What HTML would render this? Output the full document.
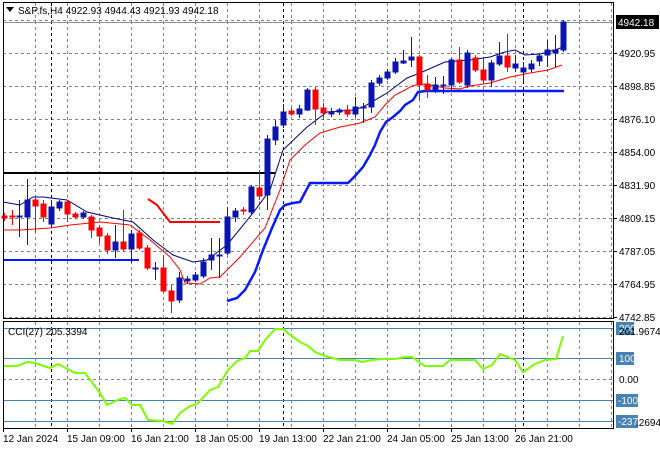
<!DOCTYPE html>
<html><head><meta charset="utf-8"><style>
html,body{margin:0;padding:0;background:#fff;width:660px;height:450px;overflow:hidden}
svg{display:block}
text{font-family:"Liberation Sans",sans-serif;font-size:10px;fill:#000}
</style></head><body>
<svg width="660" height="450" viewBox="0 0 660 450" xmlns="http://www.w3.org/2000/svg">
<rect width="660" height="450" fill="#fff"/>
<g stroke="#7a8290" stroke-width="1" stroke-dasharray="3,3" fill="none">
<path d="M3 20.5H613M3 53.5H613M3 86.5H613M3 119.5H613M3 152.5H613M3 185.5H613M3 218.5H613M3 251.5H613M3 284.5H613M3 317.5H613"/>
<path d="M35.5 3V318M67.5 3V318M99.5 3V318M131.5 3V318M163.5 3V318M195.5 3V318M227.5 3V318M259.5 3V318M291.5 3V318M323.5 3V318M355.5 3V318M387.5 3V318M419.5 3V318M451.5 3V318M483.5 3V318M515.5 3V318M547.5 3V318M579.5 3V318M611.5 3V318"/>
<path d="M35.5 322V428M67.5 322V428M99.5 322V428M131.5 322V428M163.5 322V428M195.5 322V428M227.5 322V428M259.5 322V428M291.5 322V428M323.5 322V428M355.5 322V428M387.5 322V428M419.5 322V428M451.5 322V428M483.5 322V428M515.5 322V428M547.5 322V428M579.5 322V428M611.5 322V428"/>
<path d="M3 379.5H613"/>
</g>
<g stroke="#000" stroke-width="1" stroke-dasharray="3,3">
<path d="M51.5 3V428M283.5 3V428M523.5 3V428"/>
</g>
<line x1="3" y1="22.5" x2="613" y2="22.5" stroke="#8a929a"/>
<g stroke="#4682b4" stroke-width="1">
<path d="M3 328.5H613M3 358.5H613M3 400.5H613M3 421.5H613"/>
</g>
<path d="M3 173H275" stroke="#000" stroke-width="2"/>
<path d="M3 260H139" stroke="#0a1aff" stroke-width="2"/>
<path d="M148 199L157 205L170 222L220 222" stroke="#ff0000" stroke-width="2" fill="none"/>
<polyline fill="none" stroke="#000080" stroke-width="1" points="3,202 20,205 33,197 43,197 67,200 87,212 113,218 133,222 153,240 173,255 193,262 207,260 227,245 253,213 270,190 283,150 307,127 327,112 353,110 363,107 387,93 407,78 420,73 445,62 470,60 490,57 505,52 515,50 525,55 540,54 555,50 563,47"/>
<polyline fill="none" stroke="#ff0000" stroke-width="1" points="3,230 20,230 50,228 70,225 100,222 130,225 150,240 170,257 180,270 185,283 200,284 210,278 220,277 240,257 265,228 280,190 290,160 305,145 320,133 340,127 360,123 375,117 385,105 395,95 405,90 412,86 420,84 430,85 445,88 460,89 470,86 490,83 510,77 530,73 548,70 562,65"/>
<polyline fill="none" stroke="#0a1aff" stroke-width="2.5" points="227,301 237,298 245,290 255,272 263,250 272,228 280,210 285,205 293,203 300,202 310,183 348,183 355,176 363,167 370,155 375,145 380,132 386,122 393,117 400,111 405,105 413,100 418,92 425,91 430,90"/>
<path d="M425 91H564" stroke="#0a1aff" stroke-width="2.5"/>
<g stroke-width="1">
<g stroke="#ff0000" fill="#ff0000">
<path d="M4.5 213V221M12.5 210V225M35.5 195V232M43.5 200V222M67.5 200V222M75.5 212V219M91.5 215V238M99.5 225V243M107.5 233V254M123.5 210V252M139.5 230V250M147.5 245V270M163.5 255V293M171.5 285V313M243.5 207V215M259.5 170V200M291.5 108V116M315.5 87V125M323.5 103V120M347.5 105V117M419.5 55V100M427.5 75V98M459.5 47V84M475.5 55V72M483.5 58V83M507.5 34V72"/>
<rect x="2" y="216" width="5" height="2"/><rect x="10" y="216" width="5" height="1"/>
<rect x="33" y="200" width="5" height="6"/><rect x="41" y="204" width="5" height="13"/>
<rect x="65" y="202" width="5" height="12"/><rect x="73" y="214" width="5" height="3"/>
<rect x="89" y="217" width="5" height="13"/><rect x="97" y="228" width="5" height="8"/>
<rect x="105" y="236" width="5" height="14"/><rect x="121" y="242" width="5" height="7"/>
<rect x="137" y="233" width="5" height="15"/><rect x="145" y="248" width="5" height="20"/>
<rect x="161" y="268" width="5" height="23"/><rect x="169" y="291" width="5" height="10"/>
<rect x="241" y="210" width="5" height="1"/><rect x="257" y="188" width="5" height="8"/>
<rect x="289" y="111" width="5" height="3"/><rect x="313" y="90" width="5" height="19"/>
<rect x="321" y="108" width="5" height="5"/><rect x="345" y="110" width="5" height="4"/>
<rect x="417" y="57" width="5" height="28"/><rect x="425" y="84" width="5" height="6"/>
<rect x="457" y="60" width="5" height="22"/><rect x="473" y="58" width="5" height="12"/>
<rect x="481" y="70" width="5" height="10"/><rect x="505" y="56" width="5" height="11"/>
</g>
<g stroke="#0a14b4" fill="#0a14b4">
<path d="M19.5 200V237M27.5 179V245M51.5 200V226M59.5 200V211M83.5 211V219M115.5 225V258M131.5 230V263M155.5 262V280M179.5 272V303M187.5 276V284M195.5 272V282M203.5 258V278M211.5 238V270M219.5 238V278M227.5 207V255M235.5 208V222M251.5 185V214M267.5 135V210M275.5 120V145M283.5 104V128M299.5 105V118M307.5 88V111M331.5 108V117M339.5 108V115M355.5 97V117M363.5 103V123M371.5 80V113M379.5 75V86M387.5 69V80M395.5 58V74M403.5 50V64M411.5 37V67M435.5 77V93M443.5 76V94M451.5 58V90M467.5 50V88M491.5 60V87M499.5 42V66M515.5 55V72M523.5 62V82M531.5 60V72M539.5 54V66M547.5 40V67M555.5 35V67M563.5 20V52"/>
<rect x="17" y="216" width="5" height="1"/><rect x="25" y="200" width="5" height="17"/>
<rect x="49" y="207" width="5" height="17"/><rect x="57" y="202" width="5" height="6"/>
<rect x="81" y="213" width="5" height="4"/><rect x="113" y="242" width="5" height="8"/>
<rect x="129" y="234" width="5" height="15"/><rect x="153" y="268" width="5" height="1"/>
<rect x="177" y="278" width="5" height="22"/><rect x="185" y="279" width="5" height="2"/>
<rect x="193" y="275" width="5" height="5"/><rect x="201" y="262" width="5" height="14"/>
<rect x="209" y="255" width="5" height="5"/><rect x="217" y="255" width="5" height="1"/>
<rect x="225" y="217" width="5" height="36"/><rect x="233" y="211" width="5" height="6"/>
<rect x="249" y="187" width="5" height="25"/><rect x="265" y="139" width="5" height="56"/>
<rect x="273" y="127" width="5" height="13"/><rect x="281" y="112" width="5" height="13"/>
<rect x="297" y="109" width="5" height="5"/><rect x="305" y="90" width="5" height="20"/>
<rect x="329" y="112" width="5" height="2"/><rect x="337" y="110" width="5" height="2"/>
<rect x="353" y="107" width="5" height="7"/><rect x="361" y="107" width="5" height="1"/>
<rect x="369" y="83" width="5" height="24"/><rect x="377" y="78" width="5" height="5"/>
<rect x="385" y="72" width="5" height="6"/><rect x="393" y="62" width="5" height="10"/>
<rect x="401" y="61" width="5" height="2"/><rect x="409" y="57" width="5" height="3"/>
<rect x="433" y="85" width="5" height="5"/><rect x="441" y="85" width="5" height="1"/>
<rect x="449" y="60" width="5" height="25"/><rect x="465" y="53" width="5" height="32"/>
<rect x="489" y="63" width="5" height="17"/><rect x="497" y="56" width="5" height="8"/>
<rect x="513" y="64" width="5" height="4"/><rect x="521" y="68" width="5" height="4"/>
<rect x="529" y="64" width="5" height="5"/><rect x="537" y="56" width="5" height="5"/>
<rect x="545" y="50" width="5" height="5"/><rect x="553" y="50" width="5" height="3"/>
<rect x="561" y="22" width="5" height="28"/>
</g>
</g>
<polyline fill="none" stroke="#7cfc00" stroke-width="2" points="3,366 17,366 27,362 35,363 50,368 58,364 75,373 85,373 100,393 107,405 120,399 125,398 132,405 140,405 148,420 163,421 172,424 180,413 190,406 197,404 210,390 218,387 228,370 237,361 245,358 250,351 258,351 265,340 275,329 283,329 290,335 300,342 308,346 315,352 325,356 340,360 355,360 362,362 372,360 380,359 395,359 405,357 412,357 420,363 425,366 443,366 450,360 475,360 483,369 492,365 500,354 515,360 523,372 535,364 545,360 556,359 563,336"/>
<rect x="3.5" y="2.5" width="610" height="316" fill="none" stroke="#000"/>
<rect x="3.5" y="321.5" width="610" height="107" fill="none" stroke="#000"/>
<path d="M6 7H14L10 12Z" fill="#000"/>
<text x="18" y="14">S&amp;P.fs,H4  4922.93 4944.43 4921.93 4942.18</text>
<text x="8" y="335">CCI(27) 205.3394</text>
<g>
<path d="M613 53.5H617M613 86.5H617M613 119.5H617M613 152.5H617M613 185.5H617M613 218.5H617M613 251.5H617M613 284.5H617M613 317.5H617" stroke="#000"/>
<text x="619" y="57">4920.95</text><text x="619" y="90">4898.85</text>
<text x="619" y="123">4876.10</text><text x="619" y="156">4854.00</text>
<text x="619" y="189">4831.90</text><text x="619" y="222">4809.15</text>
<text x="619" y="255">4787.05</text><text x="619" y="288">4764.95</text>
<text x="619" y="321">4742.85</text>
<rect x="616" y="15" width="43" height="14" fill="#000"/>
<text x="618" y="26" style="fill:#fff">4942.18</text>
<rect x="616" y="322" width="18" height="13" fill="#4682b4"/>
<text x="619" y="332" style="fill:#fff">200</text>
<text x="619" y="335">261.9674</text>
<rect x="616" y="352" width="18" height="13" fill="#4682b4"/>
<text x="619" y="362" style="fill:#fff">100</text>
<text x="619" y="383">0.00</text>
<rect x="616" y="394" width="22" height="13" fill="#4682b4"/>
<text x="618" y="404" style="fill:#fff">-100</text>
<rect x="616" y="415" width="22" height="13" fill="#4682b4"/>
<text x="618" y="425" style="fill:#fff">-237</text>
<text x="636" y="426">.2694</text>
</g>
<path d="M3.5 428V432M67.5 428V432M131.5 428V432M195.5 428V432M259.5 428V432M323.5 428V432M387.5 428V432M451.5 428V432M515.5 428V432" stroke="#000"/>
<text x="3" y="442">12 Jan 2024</text>
<text x="67" y="442">15 Jan 09:00</text>
<text x="131" y="442">16 Jan 21:00</text>
<text x="195" y="442">18 Jan 05:00</text>
<text x="259" y="442">19 Jan 13:00</text>
<text x="323" y="442">22 Jan 21:00</text>
<text x="387" y="442">24 Jan 05:00</text>
<text x="451" y="442">25 Jan 13:00</text>
<text x="515" y="442">26 Jan 21:00</text>
</svg>
</body></html>
